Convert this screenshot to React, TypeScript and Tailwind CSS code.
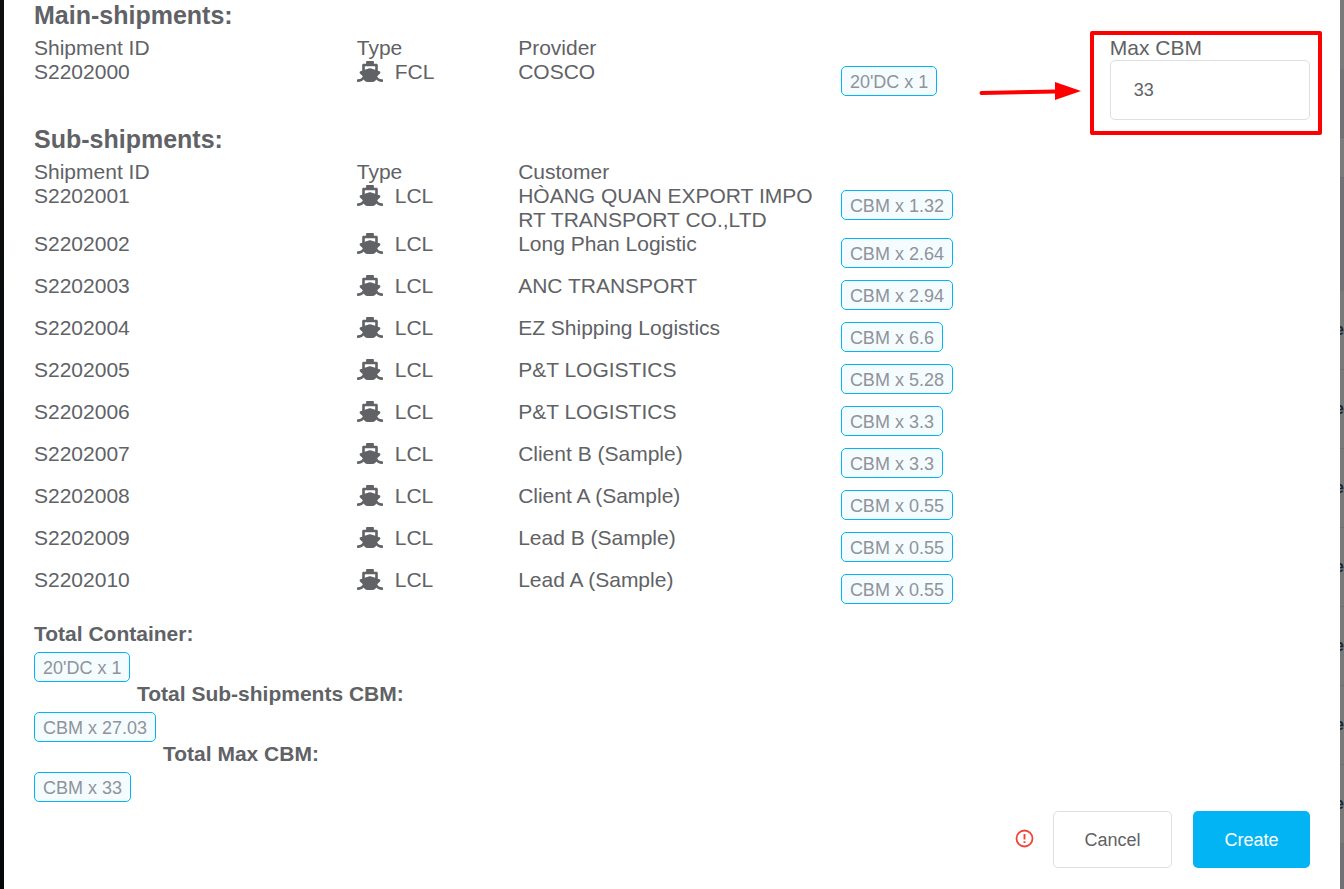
import { useState } from 'react';
import { FaShip } from 'react-icons/fa';

interface Shipment {
  id: string;
  type: 'FCL' | 'LCL';
  party: string;
  amount: string;
}

const mainShipment: Shipment = { id: 'S2202000', type: 'FCL', party: 'COSCO', amount: "20'DC x 1" };

const subShipments: Shipment[] = [
  { id: 'S2202001', type: 'LCL', party: 'HÒANG QUAN EXPORT IMPORT TRANSPORT CO.,LTD', amount: 'CBM x 1.32' },
  { id: 'S2202002', type: 'LCL', party: 'Long Phan Logistic', amount: 'CBM x 2.64' },
  { id: 'S2202003', type: 'LCL', party: 'ANC TRANSPORT', amount: 'CBM x 2.94' },
  { id: 'S2202004', type: 'LCL', party: 'EZ Shipping Logistics', amount: 'CBM x 6.6' },
  { id: 'S2202005', type: 'LCL', party: 'P&T LOGISTICS', amount: 'CBM x 5.28' },
  { id: 'S2202006', type: 'LCL', party: 'P&T LOGISTICS', amount: 'CBM x 3.3' },
  { id: 'S2202007', type: 'LCL', party: 'Client B (Sample)', amount: 'CBM x 3.3' },
  { id: 'S2202008', type: 'LCL', party: 'Client A (Sample)', amount: 'CBM x 0.55' },
  { id: 'S2202009', type: 'LCL', party: 'Lead B (Sample)', amount: 'CBM x 0.55' },
  { id: 'S2202010', type: 'LCL', party: 'Lead A (Sample)', amount: 'CBM x 0.55' },
];

const backgroundRows = [1, 2, 3, 4, 5, 6, 7];

function Tag({ children }: { children: string }) {
  return (
    <span className="flex h-[30px] w-fit items-center rounded-[5px] border border-[#03b4f4] bg-[#f4fcff] px-2 pt-[2px] text-[18px] leading-6 whitespace-nowrap text-[#909399]">
      {children}
    </span>
  );
}

function Columns() {
  return (
    <colgroup>
      <col className="w-3/12" />
      <col className="w-[12.5%]" />
      <col className="w-3/12" />
      <col className="w-5/24" />
      <col className="w-2/12" />
    </colgroup>
  );
}

function ShipmentCells({ shipment }: { shipment: Shipment }) {
  return (
    <>
      <td>{shipment.id}</td>
      <td>
        <span className="flex items-end gap-3">
          <FaShip className="mb-[2px] h-[21px] w-[26px]" />
          {shipment.type}
        </span>
      </td>
      <td className="pr-4 break-all">{shipment.party}</td>
      <td className="py-[6px]">
        <Tag>{shipment.amount}</Tag>
      </td>
    </>
  );
}

export default function App() {
  const [maxCbm, setMaxCbm] = useState('33');

  return (
    <div className="flex min-h-screen font-['Liberation_Sans',Arial,sans-serif] text-[21px] leading-6 text-[#606266]">
      <div className="w-1 bg-linear-to-b from-[#0e0f10] to-[#03070a]" />

      <main className="relative flex-1 bg-white pl-[30px]">
        <div className="pr-[15px]">
          <h2 className="mb-[6px] text-[25px] leading-[30px] font-bold">Main-shipments:</h2>
          <table className="mb-1 w-full table-fixed text-left">
            <Columns />
            <thead>
              <tr>
                <th className="font-normal">Shipment ID</th>
                <th className="font-normal">Type</th>
                <th className="font-normal">Provider</th>
                <td />
                <th className="font-normal">
                  <label htmlFor="max-cbm">Max CBM</label>
                </th>
              </tr>
            </thead>
            <tbody>
              <tr className="align-top">
                <ShipmentCells shipment={mainShipment} />
                <td className="pr-[15px]">
                  <input
                    id="max-cbm"
                    type="text"
                    value={maxCbm}
                    onChange={(e) => setMaxCbm(e.target.value)}
                    className="block h-[60px] w-full rounded-[5px] border border-[#dcdfe6] px-[23px] text-[18px] text-[#606266] outline-none"
                  />
                </td>
              </tr>
            </tbody>
          </table>

          <h2 className="mb-[6px] text-[25px] leading-[30px] font-bold">Sub-shipments:</h2>
          <table className="w-full table-fixed text-left">
            <Columns />
            <thead>
              <tr>
                <th className="font-normal">Shipment ID</th>
                <th className="font-normal">Type</th>
                <th className="font-normal">Customer</th>
                <td />
                <td />
              </tr>
            </thead>
            <tbody>
              {subShipments.map((shipment) => (
                <tr key={shipment.id} className="align-top">
                  <ShipmentCells shipment={shipment} />
                  <td />
                </tr>
              ))}
            </tbody>
          </table>

          <section className="mt-3">
            <h3 className="mb-[6px] font-bold">Total Container:</h3>
            <Tag>20'DC x 1</Tag>
            <h3 className="mb-[6px] pl-[103px] font-bold">Total Sub-shipments CBM:</h3>
            <Tag>CBM x 27.03</Tag>
            <h3 className="mb-[6px] pl-[129px] font-bold">Total Max CBM:</h3>
            <Tag>CBM x 33</Tag>
          </section>
        </div>

        <footer className="mt-[9px] flex items-center justify-end pr-[30px] pb-[21px] text-[18px]">
          <svg className="mr-[19px] mb-[3px] size-[19px] text-[#f44336]" viewBox="0 0 19 19" fill="none" stroke="currentColor" role="img" aria-label="Error">
            <circle cx="9.5" cy="9.5" r="8" strokeWidth="1.8" />
            <path d="M9.5 5v5.4M9.5 12.2v1.9" strokeWidth="1.9" />
          </svg>
          <button type="button" className="mr-[21px] h-[57px] w-[119px] rounded-[5px] border border-[#dcdfe6] bg-white">
            Cancel
          </button>
          <button type="button" className="h-[57px] w-[117px] rounded-[5px] bg-[#03b4f4] text-white">
            Create
          </button>
        </footer>

        {/* Callout over the Max CBM field */}
        <div className="pointer-events-none absolute top-[31px] right-[18px] flex items-center">
          <svg className="mt-4 mr-[9px] h-5 w-[103px]" viewBox="0 0 103 20" fill="#ff0000">
            <path d="M3.5 12L78 10.5" stroke="#ff0000" strokeWidth="4" strokeLinecap="round" />
            <path d="M77 1L103 10L77 19Z" />
          </svg>
          <div className="h-[104px] w-[232px] rounded-[2px] border-4 border-[#ff0000]" />
        </div>
      </main>

      {/* Strip of the dimmed page behind the dialog */}
      <aside className="flex w-1 flex-col overflow-hidden bg-[#717176]" aria-hidden="true">
        <div className="h-[69px] bg-[#797979]" />
        <div className="h-[68px]" />
        <div className="h-[41px] border-y border-[#6c6c6e] bg-[#7b7b7b]" />
        <div className="h-[113px]" />
        {backgroundRows.map((row) => (
          <div
            key={row}
            className="flex h-[79px] items-center justify-end border-b border-[#6e6e6e] bg-[#797979] text-[16px] font-bold text-[#1c2630]"
          >
            e
          </div>
        ))}
      </aside>
    </div>
  );
}
